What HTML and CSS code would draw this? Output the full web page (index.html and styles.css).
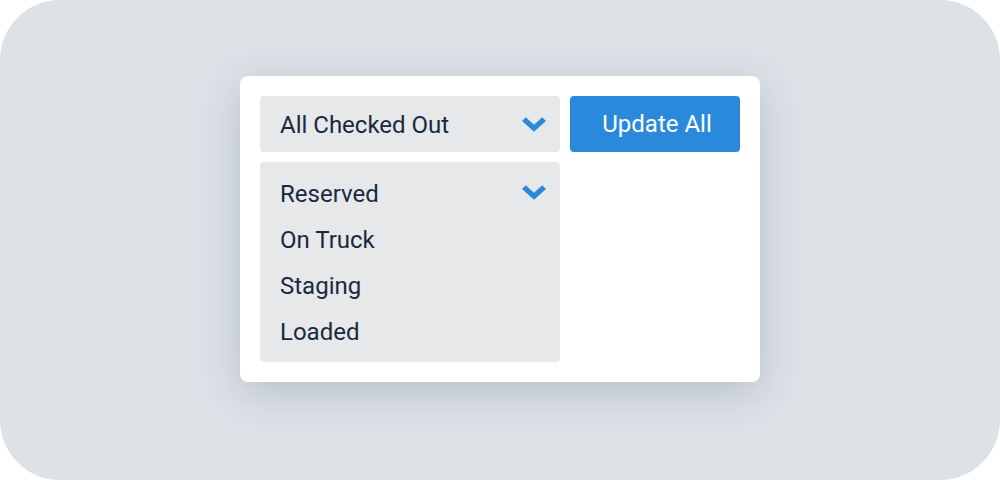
FILE: index.html
```html
<!DOCTYPE html>
<html lang="en">
<head>
    <meta charset="UTF-8">
    <title>Status Update</title>
    <link rel="stylesheet" href="styles.css">
</head>
<body>
    <div class="stage">
        <div class="card">
            <div class="row">
                <div class="select">
                    <span>All Checked Out</span>
                    <svg class="chevron" viewBox="0 0 24 15"><path d="M0 4 L3.8 0.3 L12 7.8 L20.2 0.3 L24 4 L12 14.8 Z"/></svg>
                </div>
                <button class="update-button">Update All</button>
            </div>
            <ul class="options">
                <li>
                    <span>Reserved</span>
                    <svg class="chevron" viewBox="0 0 24 15"><path d="M0 4 L3.8 0.3 L12 7.8 L20.2 0.3 L24 4 L12 14.8 Z"/></svg>
                </li>
                <li><span>On Truck</span></li>
                <li><span>Staging</span></li>
                <li><span>Loaded</span></li>
            </ul>
        </div>
    </div>
</body>
</html>
```

FILE: styles.css
```css
body {
    margin: 0;
    background-color: #ffffff;
    font-family: Roboto, "Noto Sans", sans-serif;
}

.stage {
    width: 1000px;
    height: 480px;
    box-sizing: border-box;
    padding-bottom: 22px;
    background-color: #dde2e7;
    border-radius: 60px;
    display: flex;
    align-items: center;
    justify-content: center;
}

.card {
    width: 480px;
    background-color: white;
    border-radius: 8px;
    padding: 20px;
    box-shadow: 0 10px 40px rgba(110, 125, 145, 0.35);
    display: flex;
    flex-direction: column;
    gap: 10px;
}

.row {
    display: flex;
    gap: 10px;
}

.select {
    width: 300px;
    height: 56px;
    box-sizing: border-box;
    background-color: #e6e8ea;
    border-radius: 4px;
    padding: 1px 14px 0 20px;
    display: flex;
    align-items: center;
    justify-content: space-between;
    color: #182a40;
    font-size: 24px;
}

.chevron {
    width: 24px;
    height: 15px;
    fill: #2b8ad9;
}

.update-button {
    width: 170px;
    height: 56px;
    padding: 0 0 0 4px;
    border: none;
    border-radius: 4px;
    background-color: #2a89da;
    color: white;
    font-family: inherit;
    font-size: 24px;
    cursor: pointer;
}

.options {
    list-style: none;
    margin: 0;
    width: 300px;
    box-sizing: border-box;
    padding: 9px 14px 7px 20px;
    background-color: #e6e8ea;
    border-radius: 4px;
    color: #182a40;
    font-size: 24px;
}

.options li {
    height: 46px;
    display: flex;
    align-items: center;
    justify-content: space-between;
}

.options li .chevron {
    margin-top: -4px;
}
```
